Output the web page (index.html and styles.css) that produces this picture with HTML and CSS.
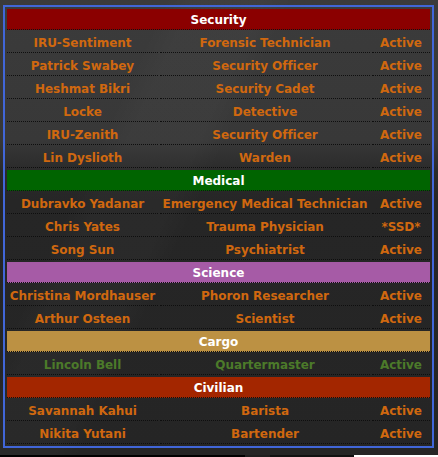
FILE: index.html
```html
<!DOCTYPE html>
<html>
<head>
<meta charset="utf-8">
<link rel="stylesheet" href="styles.css">
</head>
<body>
<div class="page">
  <div class="panel">
    <div class="roster">
      <div class="dept dept-security">Security</div>
      <div class="cell">IRU-Sentiment</div><div class="cell">Forensic Technician</div><div class="cell">Active</div>
      <div class="cell">Patrick Swabey</div><div class="cell">Security Officer</div><div class="cell">Active</div>
      <div class="cell">Heshmat Bikri</div><div class="cell">Security Cadet</div><div class="cell">Active</div>
      <div class="cell">Locke</div><div class="cell">Detective</div><div class="cell">Active</div>
      <div class="cell">IRU-Zenith</div><div class="cell">Security Officer</div><div class="cell">Active</div>
      <div class="cell">Lin Dyslioth</div><div class="cell">Warden</div><div class="cell">Active</div>

      <div class="dept dept-medical">Medical</div>
      <div class="cell">Dubravko Yadanar</div><div class="cell">Emergency Medical Technician</div><div class="cell">Active</div>
      <div class="cell">Chris Yates</div><div class="cell">Trauma Physician</div><div class="cell">*SSD*</div>
      <div class="cell">Song Sun</div><div class="cell">Psychiatrist</div><div class="cell">Active</div>

      <div class="dept dept-science">Science</div>
      <div class="cell">Christina Mordhauser</div><div class="cell">Phoron Researcher</div><div class="cell">Active</div>
      <div class="cell">Arthur Osteen</div><div class="cell">Scientist</div><div class="cell">Active</div>

      <div class="dept dept-cargo">Cargo</div>
      <div class="cell head">Lincoln Bell</div><div class="cell head">Quartermaster</div><div class="cell head">Active</div>

      <div class="dept dept-civilian">Civilian</div>
      <div class="cell">Savannah Kahui</div><div class="cell">Barista</div><div class="cell">Active</div>
      <div class="cell">Nikita Yutani</div><div class="cell">Bartender</div><div class="cell">Active</div>
    </div>
  </div>
  <div class="edge"></div>
</div>
</body>
</html>
```

FILE: styles.css
```css
html, body {
  margin: 0;
  padding: 0;
}

body {
  width: 438px;
  height: 457px;
  overflow: hidden;
  background:
    linear-gradient(115deg, rgba(255,255,255,0) 0, rgba(255,255,255,0) 150px, rgba(255,255,255,0.02) 175px, rgba(255,255,255,0.02) 240px, rgba(255,255,255,0) 265px),
    linear-gradient(to bottom, #3b3b3b 0, #383838 140px, #2a2a2a 172px, #262626 200px, #252525 100%);
  font-family: "DejaVu Sans", Verdana, sans-serif;
  font-weight: bold;
  font-size: 12px;
}

.page {
  display: flex;
  flex-direction: column;
  height: 457px;
}

.panel {
  margin: 5px 0 0 3px;
  width: 427px;
  border: 2px solid #4166d8;
}

.roster {
  display: grid;
  grid-template-columns: 151px 210px 58px;
  gap: 2px;
  padding: 2px;
}

.dept {
  grid-column: 1 / -1;
  height: 19px;
  padding-top: 1px;
  line-height: 20px;
  text-align: center;
  color: #ffffff;
  border-bottom: 1px dotted #111;
}

.dept-security { background: #8b0000; }
.dept-medical { background: #006400; }
.dept-science { background: #a65ba6; }
.dept-cargo { background: #bc9143; }
.dept-civilian { background: #a32600; }

.cell {
  height: 19px;
  padding-top: 1px;
  line-height: 20px;
  text-align: center;
  white-space: nowrap;
  letter-spacing: -0.05px;
  color: #d0680f;
  border-bottom: 1px dotted #0e0e0e;
}

.cell.head {
  color: #4c7a2a;
}

.edge {
  margin-top: auto;
  height: 2px;
  background: linear-gradient(to right, #000 0, #000 245px, #1e1e1e 245px, #1e1e1e 270px, #111 270px, #111 354px, #fff 354px);
}
```
